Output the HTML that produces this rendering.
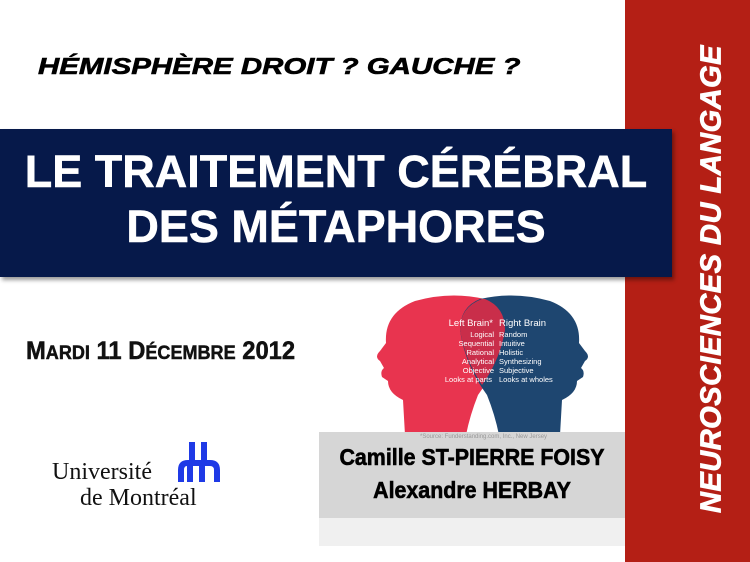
<!DOCTYPE html>
<html><head><meta charset="utf-8"><style>
body{margin:0;width:750px;height:562px;overflow:hidden;background:#fff;position:relative;font-family:"Liberation Sans",sans-serif}
.abs{position:absolute}
</style></head><body>
<div class="abs" style="left:625px;top:0;width:125px;height:562px;background:#b41f15"></div>
<div class="abs" style="left:712px;top:279px;width:0;height:0">
 <div style="position:absolute;transform:translate(-50%,-50%) rotate(-90deg);white-space:nowrap;color:#fff;font-weight:bold;font-style:italic;font-size:29px;letter-spacing:0.5px;-webkit-text-stroke:0.8px #fff">NEUROSCIENCES DU LANGAGE</div>
</div>
<div class="abs" style="left:38px;top:53px;font-weight:bold;font-style:italic;font-size:23px;color:#000;transform:scaleX(1.28);transform-origin:left;-webkit-text-stroke:0.6px #000">HÉMISPHÈRE DROIT ? GAUCHE ?</div>
<div class="abs" style="left:0;top:129px;width:672px;height:148px;background:#06194a;box-shadow:2px 3px 4px rgba(0,0,0,.4)"></div>
<div class="abs" style="left:0;top:144px;width:672px;text-align:center;color:#fff;font-weight:bold;font-size:45px;line-height:55px;-webkit-text-stroke:0.5px #fff">LE TRAITEMENT CÉRÉBRAL<br>DES MÉTAPHORES</div>
<div class="abs" style="left:26px;top:337px;font-weight:bold;font-size:25px;color:#111;transform:scaleX(0.95);transform-origin:left;-webkit-text-stroke:0.5px #111">M<span style="font-size:19px">ARDI</span> 11 D<span style="font-size:19px">ÉCEMBRE</span> 2012</div>
<svg class="abs" style="left:370px;top:295px" width="225" height="140" viewBox="0 0 225 140">
 <path d="M35 140 L33 105 Q18 98 18 86 L12 82 Q10 76 14 73 L10 66 Q4 62 10 56 L16 48 Q14 18 45 6 Q80 -4 115 4 Q135 12 135 35 Q130 70 108 100 Q100 120 96 140 Z" fill="#e8344f"/>
 <path d="M190 140 L192 105 Q207 98 207 86 L213 82 Q215 76 211 73 L215 66 Q221 62 215 56 L209 48 Q211 18 180 6 Q145 -4 110 4 Q90 12 90 35 Q95 70 117 100 Q125 120 129 140 Z" fill="#1e4670"/>
 <path d="M112 4 Q90 12 90 35 Q95 65 112 90 Q130 65 135 35 Q135 12 115 4Z" fill="#c92e4a"/>
 <g font-family="Liberation Sans,sans-serif" fill="#fff" font-size="7.5">
 <text x="123" y="31" text-anchor="end" font-size="9.5">Left Brain*</text>
 <text x="124" y="42" text-anchor="end">Logical</text><text x="124" y="51" text-anchor="end">Sequential</text><text x="124" y="60" text-anchor="end">Rational</text><text x="124" y="69" text-anchor="end">Analytical</text><text x="124" y="78" text-anchor="end">Objective</text><text x="122" y="87" text-anchor="end">Looks at parts</text>
 <text x="129" y="31" font-size="9.5">Right Brain</text>
 <text x="129" y="42">Random</text><text x="129" y="51">Intuitive</text><text x="129" y="60">Holistic</text><text x="129" y="69">Synthesizing</text><text x="129" y="78">Subjective</text><text x="129" y="87">Looks at wholes</text>
 </g>
</svg>
<div class="abs" style="left:319px;top:432px;width:306px;height:86px;background:#d6d6d6"></div>
<div class="abs" style="left:319px;top:518px;width:306px;height:28px;background:#f0f0f0"></div>
<div class="abs" style="left:420px;top:434px;font-size:6px;color:#999">*Source: Funderstanding.com, Inc., New Jersey</div>
<div class="abs" style="left:319px;top:441px;width:306px;text-align:center;font-weight:bold;font-size:23px;line-height:33px;color:#000;transform:scaleX(0.93);-webkit-text-stroke:0.6px #000">Camille ST-PIERRE FOISY<br>Alexandre HERBAY</div>
<div class="abs" style="left:52px;top:459px;font-family:'Liberation Serif',serif;font-size:24px;line-height:26px;color:#111">Université<br><span style="padding-left:28px">de Montréal</span></div>
<svg class="abs" style="left:176px;top:442px" width="46" height="40" viewBox="0 0 46 40">
 <g fill="#1f3ae6"><rect x="13" y="0" width="6" height="22"/><rect x="25" y="0" width="6" height="22"/>
 <path d="M2 40 V28 Q2 18 12 18 H34 Q44 18 44 28 V40 H38 V28 Q38 24 34 24 H29 V40 H23 V24 H17 V40 H11 V24 Q8 24 8 28 V40Z"/></g>
</svg>
</body></html>
